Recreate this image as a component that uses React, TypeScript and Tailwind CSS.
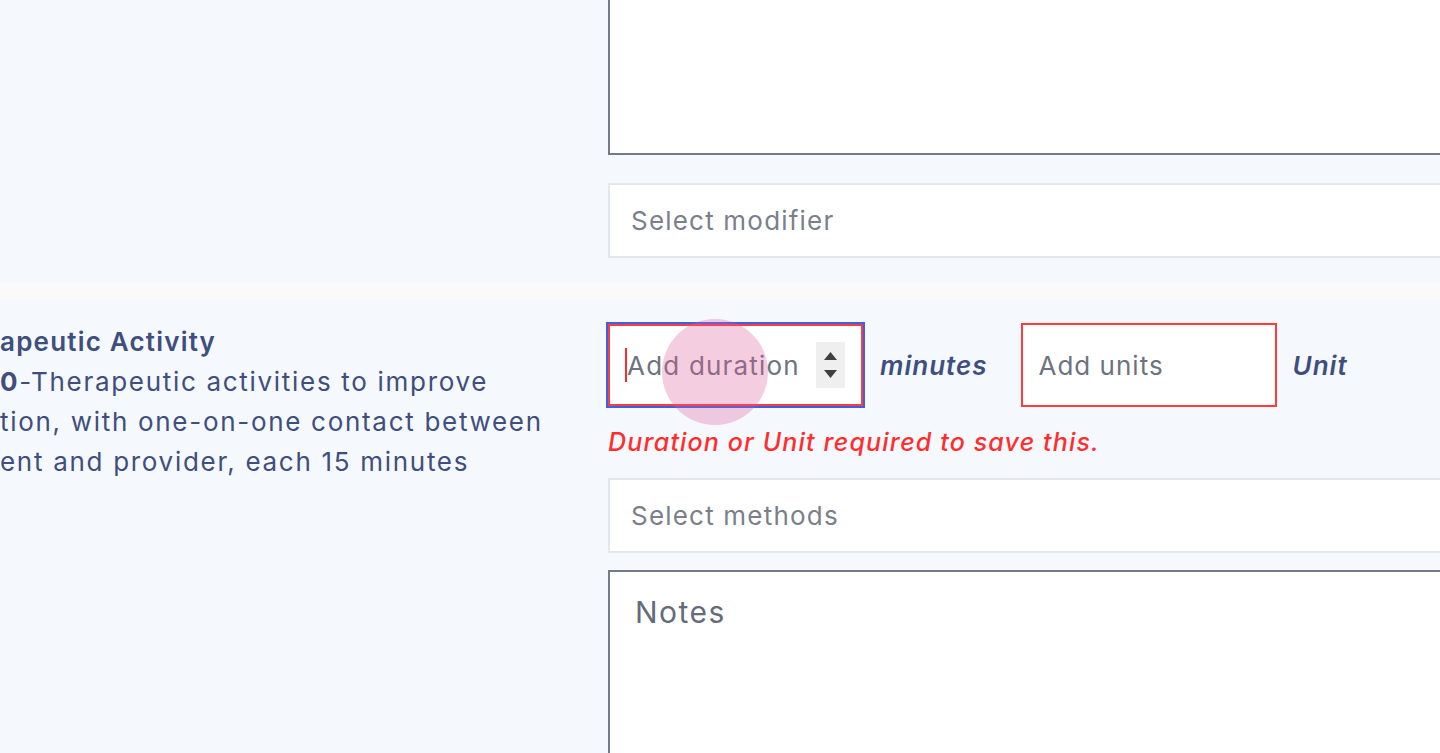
import React from "react";

function Spin() {
  return (
    <div className="flex flex-col items-center justify-center gap-[10px] w-[29px] h-[46px] bg-[#efefef] shrink-0">
      <svg width="13" height="8" viewBox="0 0 13 8"><path d="M6.5 0 L13 8 L0 8 Z" fill="#3f3f3f" /></svg>
      <svg width="13" height="8" viewBox="0 0 13 8"><path d="M0 0 L13 0 L6.5 8 Z" fill="#3f3f3f" /></svg>
    </div>
  );
}

export default function App() {
  return (
    <div
      className="relative w-[1440px] h-[753px] overflow-hidden bg-[#f5f8fd] text-[#3e4f7e]"
      style={{ fontFamily: "Inter, 'Open Sans', sans-serif" }}
    >
      {/* Section 1 */}
      <div className="grid grid-cols-[608px_1fr] h-[283px]">
        <div />
        <div className="flex flex-col">
          <div className="-mt-[100px] h-[255px] w-[900px] bg-white border-2 border-[#727a8c]" />
          <div className="mt-[28px] h-[75px] w-[900px] bg-white border-2 border-[#e3e7ee] flex items-center pl-[21px] text-[26px] tracking-[1.2px] text-[#7a7f8a]">
            Select modifier
          </div>
        </div>
      </div>

      <div className="h-[17px] bg-[#fafafa]" />

      {/* Section 2 */}
      <div className="grid grid-cols-[608px_1fr] pt-[22px]">
        <div className="text-[26px] leading-[40px] tracking-[1.7px] whitespace-nowrap">
          <div className="font-semibold tracking-[1.2px]">apeutic Activity</div>
          <div>
            <span className="font-bold">0</span>-Therapeutic activities to improve
          </div>
          <div>tion, with one-on-one contact between</div>
          <div>ent and provider, each 15 minutes</div>
        </div>

        <div className="flex flex-col">
          <div className="flex items-center h-[86px]">
            <div className="h-[82px] w-[255px] bg-white border-2 border-[#ff3b3b] ring-2 ring-[#3a62e6] flex items-center pl-[15px] pr-[16px]">
              <div className="w-[2px] h-[34px] bg-[#ff2a2a] shrink-0" />
              <span className="flex-1 text-[26px] tracking-[1.2px] text-[#6d7380]">Add duration</span>
              <Spin />
            </div>
            <span className="ml-[17px] text-[26px] tracking-[1px] italic font-semibold">minutes</span>
            <div className="ml-[33px] h-[84px] w-[256px] bg-white border-2 border-[#ff3b3b] flex items-center pl-[16px] text-[26px] tracking-[1px] text-[#6d7380]">
              Add units
            </div>
            <span className="ml-[16px] text-[26px] tracking-[1px] italic font-semibold">Unit</span>
          </div>

          <div className="mt-[16px] text-[25px] tracking-[1.15px] italic font-medium text-[#ff2d2d] leading-[36px] whitespace-nowrap">
            Duration or Unit required to save this.
          </div>

          <div className="mt-[18px] h-[75px] w-[900px] bg-white border-2 border-[#e3e7ee] flex items-center pl-[21px] text-[26px] tracking-[1.2px] text-[#7a7f8a]">
            Select methods
          </div>

          <div className="mt-[17px] h-[300px] w-[900px] bg-white border-2 border-[#727a8c] pl-[25px] pt-[18px] text-[30px] tracking-[1.5px] text-[#646c7b]">
            Notes
          </div>
        </div>
      </div>

      {/* click indicator */}
      <div className="absolute left-[662px] top-[319px] w-[106px] h-[106px] rounded-full bg-[rgba(222,88,152,0.3)] pointer-events-none" />
    </div>
  );
}
